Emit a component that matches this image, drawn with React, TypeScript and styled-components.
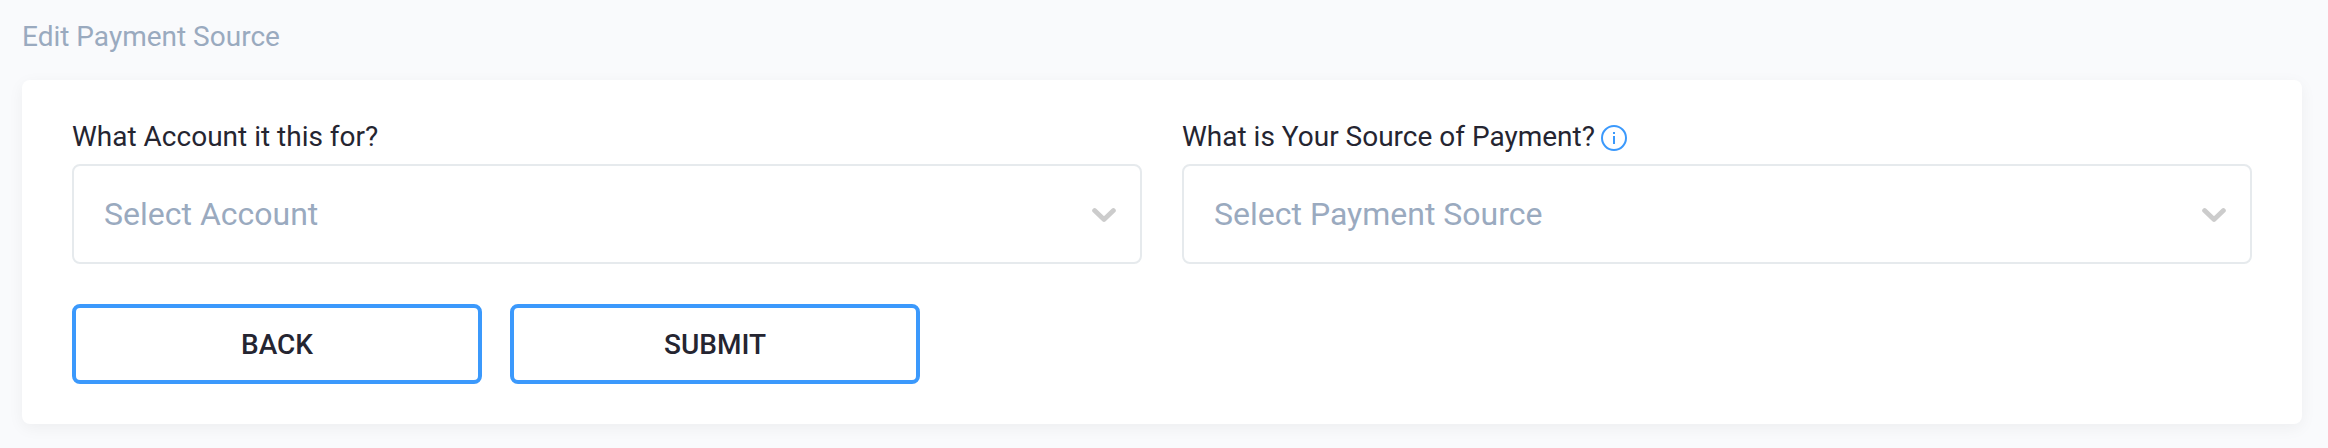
import React from "react";
import styled, { createGlobalStyle } from "styled-components";

const Global = createGlobalStyle`
  * { box-sizing: border-box; }
  body { margin: 0; background: #f9fafc; color: #252531; font-family: Roboto, sans-serif; }
`;
const Page = styled.main`
  padding: 20px 26px 24px 22px;
`;
const Title = styled.h1`
  margin: 0 0 26px;
  font-size: 28px;
  line-height: 34px;
  font-weight: 400;
  color: #9aaabf;
`;
const Card = styled.form`
  background: #fff;
  border-radius: 8px;
  box-shadow: 0 4px 16px rgba(0, 0, 0, 0.05);
  padding: 40px 50px;
`;
const Fields = styled.div`
  display: grid;
  grid-template-columns: 1fr 1fr;
  gap: 40px;
`;
const LabelRow = styled.div`
  display: flex;
  align-items: center;
  gap: 6px;
  margin-bottom: 10px;
`;
const Label = styled.label`
  font-size: 28px;
  line-height: 34px;
`;
const InfoButton = styled.button`
  display: flex;
  padding: 0;
  border: 0;
  background: none;
`;
const SelectBox = styled.div`
  display: grid;
  align-items: center;
  & > * { grid-area: 1 / 1; }
`;
const Select = styled.select`
  appearance: none;
  width: 100%;
  height: 100px;
  padding: 0 80px 0 30px;
  border: 2px solid #e6eaed;
  border-radius: 8px;
  background: #fff;
  color: #9aaabf;
  font: 400 32px/40px Roboto, sans-serif;
`;
const Chevron = styled.svg`
  justify-self: end;
  margin-right: 26px;
  pointer-events: none;
`;
const Actions = styled.div`
  display: flex;
  gap: 28px;
  margin-top: 40px;
`;
const Button = styled.button`
  width: 410px;
  height: 80px;
  padding: 2px 0 0;
  border: 4px solid #3b99fc;
  border-radius: 8px;
  background: #fff;
  color: #252531;
  font: 500 28px/32px Roboto, sans-serif;
  text-transform: uppercase;
`;

function Field({ id, label, placeholder, info }: { id: string; label: string; placeholder: string; info?: boolean }) {
  return (
    <div>
      <LabelRow>
        <Label htmlFor={id}>{label}</Label>
        {info && (
          <InfoButton type="button" aria-label="More information">
            <svg width="26" height="28" viewBox="0 0 26 28" fill="none" stroke="#3b99fc" strokeWidth="2">
              <circle cx="13" cy="15" r="12" />
              <path d="M13 9v2M13 13v8" />
            </svg>
          </InfoButton>
        )}
      </LabelRow>
      <SelectBox>
        <Select id={id}><option>{placeholder}</option></Select>
        <Chevron width="24" height="16" viewBox="0 0 24 16" fill="none" stroke="#ccc" strokeWidth="4.8" strokeLinecap="round" strokeLinejoin="round">
          <path d="M2.6 4.6L12 13.4L21.4 4.6" />
        </Chevron>
      </SelectBox>
    </div>
  );
}

export default function App() {
  return (
    <Page>
      <Global />
      <Title>Edit Payment Source</Title>
      <Card>
        <Fields>
          <Field id="account" label="What Account it this for?" placeholder="Select Account" />
          <Field id="source" label="What is Your Source of Payment?" placeholder="Select Payment Source" info />
        </Fields>
        <Actions>
          <Button type="button">Back</Button>
          <Button type="submit">Submit</Button>
        </Actions>
      </Card>
    </Page>
  );
}
